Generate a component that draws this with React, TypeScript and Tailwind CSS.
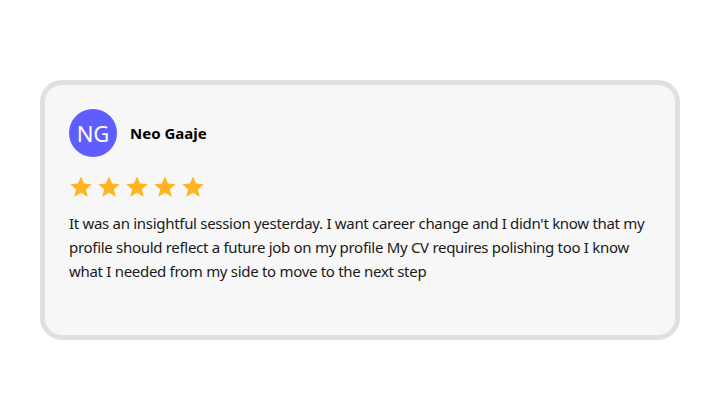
import { Star } from 'lucide-react';

const review = {
  name: 'Neo Gaaje',
  initials: 'NG',
  rating: 5,
  text: "It was an insightful session yesterday. I want career change and I didn't know that my profile should reflect a future job on my profile My CV requires polishing too I know what I needed from my side to move to the next step",
};

export default function App() {
  return (
    <div className="w-[720px] h-[420px] bg-white flex items-center justify-center font-['Noto_Sans',sans-serif]">
      <div className="w-[640px] h-[260px] rounded-[22px] border-[5px] border-[#e0e0e0] bg-[#f7f7f7] pl-6 pr-4 pt-6">
        <div className="flex items-center gap-[13px]">
          <div className="w-12 h-12 rounded-full bg-[#605dff] flex items-center justify-center text-white text-[22px] leading-none">
            {review.initials}
          </div>
          <span className="text-[15px] font-bold text-black">{review.name}</span>
        </div>

        <div className="flex gap-[4px] mt-[18px]">
          {Array.from({ length: review.rating }).map((_, i) => (
            <svg key={i} viewBox="0 0 24 24" className="w-6 h-6 text-[#ffb420]" fill="currentColor">
              <path d="M12 1.5l3.1 7.1 7.7.6-5.9 5 1.8 7.5L12 17.7l-6.7 4 1.8-7.5-5.9-5 7.7-.6z" />
            </svg>
          ))}
        </div>

        <p className="mt-[12px] text-[15px] leading-6 text-[#1a1a1a] tracking-[-0.3px]">{review.text}</p>
      </div>
    </div>
  );
}
